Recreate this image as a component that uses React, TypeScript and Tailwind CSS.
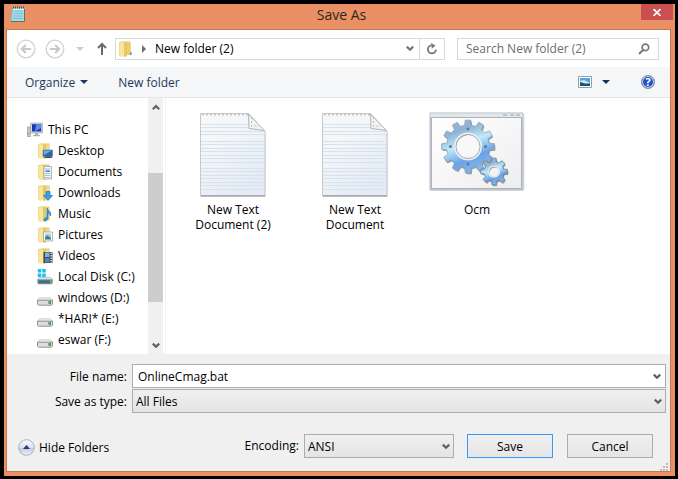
import { useState } from 'react';
import type { ReactNode } from 'react';

type DriveKind = 'pc' | 'desktop' | 'documents' | 'downloads' | 'music' | 'pictures' | 'videos' | 'system' | 'drive';

const treeItems: { label: string; kind: DriveKind }[] = [
  { label: 'Desktop', kind: 'desktop' },
  { label: 'Documents', kind: 'documents' },
  { label: 'Downloads', kind: 'downloads' },
  { label: 'Music', kind: 'music' },
  { label: 'Pictures', kind: 'pictures' },
  { label: 'Videos', kind: 'videos' },
  { label: 'Local Disk (C:)', kind: 'system' },
  { label: 'windows (D:)', kind: 'drive' },
  { label: '*HARI* (E:)', kind: 'drive' },
  { label: 'eswar (F:)', kind: 'drive' },
];

// outline of a gear with square teeth
function gearPath(cx: number, cy: number, outer: number, inner: number, teeth: number) {
  const step = (Math.PI * 2) / teeth;
  const points: string[] = [];
  for (let i = 0; i < teeth; i++) {
    const a = i * step - Math.PI / 2;
    const corners: [number, number][] = [
      [inner, a - step * 0.3],
      [outer, a - step * 0.2],
      [outer, a + step * 0.2],
      [inner, a + step * 0.3],
    ];
    corners.forEach(([r, t]) => points.push(`${(cx + r * Math.cos(t)).toFixed(2)} ${(cy + r * Math.sin(t)).toFixed(2)}`));
  }
  return `M${points.join('L')}Z`;
}

function Chevron({ up = false, className = 'text-[#606060]' }: { up?: boolean; className?: string }) {
  return (
    <svg width="8" height="7" viewBox="0 0 8 7" className={className} aria-hidden="true">
      <path d={up ? 'M0.8 5.2L4 2L7.2 5.2' : 'M0.8 1.6L4 4.8L7.2 1.6'} fill="none" stroke="currentColor" strokeWidth="2.2" />
    </svg>
  );
}

function DownTriangle({ className }: { className: string }) {
  return (
    <svg width="8" height="4" viewBox="0 0 8 4" className={className} aria-hidden="true">
      <path d="M0 0H8L4 4Z" fill="currentColor" />
    </svg>
  );
}

function NotepadIcon() {
  return (
    <svg width="16" height="17" viewBox="0 0 16 17" aria-hidden="true">
      <path d="M2 2L14.5 1.5V16H0.5Z" fill="#7fb9c6" />
      <path d="M3 2H14V15H1.5Z" fill="#a5dbe6" />
      <path d="M4 5H13M4 7.5H13M3 10H13M3 12.5H13" stroke="#7cc0d0" />
      <path d="M14.5 3V15.5H1" fill="none" stroke="#716a60" />
      <path d="M3 1.5H14" stroke="#3d5960" strokeWidth="2" strokeDasharray="1 1" />
      <path d="M3 3.5H14" stroke="#e4f5f6" />
    </svg>
  );
}

function FolderShape() {
  return (
    <>
      <path d="M1 1L4.5 0.5H12.5V14H4V15.5L1 14Z" fill="#e2c467" />
      <path d="M1.3 1.2H7L8.5 2.5V15.5H2L1.3 14.5Z" fill="#f7e5a0" />
      <path d="M6 1.2H7L9 2.8V15.5H6Z" fill="#e6c765" />
      <path d="M9 1.2H12V13.5H9Z" fill="#f0d98a" />
    </>
  );
}

function TreeIcon({ kind }: { kind: DriveKind }) {
  const drawings: Record<DriveKind, ReactNode> = {
    pc: (
      <>
        <path d="M0.5 5H3.5V14.5H0.5Z" fill="#c3c8cb" stroke="#858c90" strokeWidth="0.6" />
        <path d="M1 11H2V12H1Z" fill="#3cb33b" />
        <path d="M3.5 1H15.5V11H3.5Z" fill="#d2d6d8" stroke="#969ea2" strokeWidth="0.6" />
        <path d="M5 2.2H14.2V9.5H5Z" fill="#1737b8" />
        <path d="M9 2.2H14.2V6L8 9.5Z" fill="#5c8ce8" />
        <path d="M8 11H11V13H13V14.3H6V13H8Z" fill="#a9afb3" />
      </>
    ),
    desktop: (
      <>
        <FolderShape />
        <path d="M6 7H15.5V13.5H6Z" fill="#2d66aa" stroke="#517b9e" strokeWidth="0.6" />
        <path d="M6.5 7.5H15L7 12Z" fill="#71aadb" />
        <path d="M7 15L9 13.5H14L15.5 15Z" fill="#304c66" />
      </>
    ),
    documents: (
      <>
        <FolderShape />
        <path d="M7 2.5H14.5V15H7Z" fill="#f7fbfd" stroke="#8d9ba5" strokeWidth="0.7" />
        <path d="M8 5H13.5M8 9.5H13.5M8 11.5H13.5M8 13.5H13.5" stroke="#9caebb" strokeWidth="0.8" />
        <path d="M8.5 7.2H13" stroke="#318fe0" strokeWidth="1.6" />
      </>
    ),
    downloads: (
      <>
        <FolderShape />
        <path d="M9 6.5H13V10.5H15.5L11 15.5L6.5 10.5H9Z" fill="#37a0ee" stroke="#1770bf" strokeWidth="0.7" />
      </>
    ),
    music: (
      <>
        <FolderShape />
        <path d="M10 2C11 5 15 5.5 13.5 10C13 8 12 7.4 11 7V13C10 15.8 6 15.3 7 12.8C7.8 11.7 9 11.8 10 12Z" fill="#319be9" stroke="#1873ba" strokeWidth="0.6" />
      </>
    ),
    pictures: (
      <>
        <FolderShape />
        <path d="M6.5 5H15.5V14H6.5Z" fill="#fff" stroke="#87979e" strokeWidth="0.7" />
        <path d="M8 6.5H14V12.5H8Z" fill="#9ed0f0" />
        <path d="M8 10L10.5 8.5L14 11V12.5H8Z" fill="#477d86" />
      </>
    ),
    videos: (
      <>
        <FolderShape />
        <path d="M6.5 4H15.5V15H6.5Z" fill="#40494f" />
        <path d="M8 4.5H12.5V9H8Z" fill="#7fb2dc" />
        <path d="M8 10H12.5V14.5H8Z" fill="#4b85b8" />
        <path d="M14.2 4.5V15" stroke="#d5dde2" strokeWidth="1.4" strokeDasharray="1.5 1" />
      </>
    ),
    system: (
      <>
        <path d="M0.8 0H4.3V3.5H0.8ZM5.2 0H8.7V3.5H5.2ZM0.8 4.4H4.3V8H0.8ZM5.2 4.4H8.7V8H5.2Z" fill="#13c5f5" />
        <path d="M2.5 8.3H13.5L15.8 10.8H0.2Z" fill="#dfe2e4" stroke="#9ba0a4" strokeWidth="0.5" />
        <path d="M0.3 10.5H15.7V14L14.5 15.3H1.5L0.3 14Z" fill="#7b868c" />
        <path d="M2 11.5H13V14H2Z" fill="#28798e" />
        <path d="M13.3 11.5H14.3V14H13.3Z" fill="#4ae44c" />
      </>
    ),
    drive: (
      <>
        <path d="M2.5 7.8H13.5L15.5 10.3H0.5Z" fill="#f1f2f2" stroke="#b0b2b4" strokeWidth="0.6" />
        <path d="M0.5 10.2H15.5V14L14.5 15.2H1.5L0.5 14Z" fill="#dcdddf" stroke="#85888b" strokeWidth="0.9" />
        <path d="M11.5 11.2H14V13.8H11.5Z" fill="#3a6f35" />
        <path d="M12.2 11.6H13.4V13.4H12.2Z" fill="#4ed044" />
      </>
    ),
  };

  return (
    <svg width="16" height="16" viewBox="0 0 16 16" className="shrink-0" aria-hidden="true">
      {drawings[kind]}
    </svg>
  );
}

function TextFileIcon() {
  const lines = [12, 15, 19, 22, 29, 32, 36, 39, 43, 46, 50, 56, 59, 63, 66, 70, 73, 77];
  return (
    <svg width="68" height="86" viewBox="0 0 68 86" aria-hidden="true">
      <defs>
        <linearGradient id="paper" x1="0" y1="0" x2="0.6" y2="1">
          <stop offset="0" stopColor="#f8f8f8" />
          <stop offset="0.4" stopColor="#f3f5f8" />
          <stop offset="1" stopColor="#e5eaf6" />
        </linearGradient>
      </defs>
      <path d="M2 2H50L67 20V85H2Z" fill="#e4e4e4" />
      <path d="M1.5 1.5H49.5L66 19.5V83.5H1.5Z" fill="url(#paper)" stroke="#c6c9cc" />
      {lines.map((y) => (
        <path key={y} d={`M2 ${y + 0.5}H${y < 17 ? 50 : 65}`} stroke="#d3e4ed" />
      ))}
      <path d="M3 2.5H49" stroke="#c4c4c4" strokeWidth="2" strokeDasharray="2 2" />
      <path d="M49.5 2L65.5 18.5L50 16.5Z" fill="#f3f3f3" stroke="#b2b5b8" />
      <path d="M52.5 5V14H60" fill="none" stroke="#bcbcbc" strokeDasharray="2 2" />
      <path d="M1.5 84H66" stroke="#8d9195" />
    </svg>
  );
}

function BatchFileIcon() {
  return (
    <svg width="96" height="80" viewBox="0 0 96 80" aria-hidden="true">
      <defs>
        <linearGradient id="gear" x1="0.1" y1="0" x2="0.5" y2="1">
          <stop offset="0" stopColor="#a6b8ca" />
          <stop offset="0.25" stopColor="#8fb1d4" />
          <stop offset="0.5" stopColor="#bdebfb" />
          <stop offset="0.78" stopColor="#6ba2e6" />
          <stop offset="1" stopColor="#84b7e5" />
        </linearGradient>
        <linearGradient id="pane" x1="0" y1="0" x2="1" y2="1">
          <stop offset="0" stopColor="#fff" />
          <stop offset="1" stopColor="#eeeeef" />
        </linearGradient>
      </defs>
      <path d="M2 2H95.5V79H2Z" fill="#e6e6e6" />
      <path d="M1 1H94V78H1Z" fill="#ccd4dd" stroke="#b5bcc3" />
      <path d="M1.5 1.5H93.5V5H1.5Z" fill="#e4e7ea" />
      <path d="M74 3H78M81 3H85M87 3H91" stroke="#b4b9bf" strokeWidth="1.5" />
      <path d="M2.5 5.5H92.5V76.5H2.5Z" fill="url(#pane)" stroke="#a9b2bc" />
      <g fillRule="evenodd">
        <path d={`${gearPath(40, 36, 26.5, 21.5, 12)}M53 36A13 13 0 1 0 27 36A13 13 0 1 0 53 36Z`} fill="#68737e" opacity="0.65" />
        <path d={`${gearPath(39, 34.5, 26.5, 21.5, 12)}M52 34.5A13 13 0 1 0 26 34.5A13 13 0 1 0 52 34.5Z`} fill="url(#gear)" stroke="#8299b0" strokeWidth="0.7" />
        <path d={`${gearPath(66, 61, 13.5, 10, 8)}M71.5 61A5.5 5.5 0 1 0 60.5 61A5.5 5.5 0 1 0 71.5 61Z`} fill="#68737e" opacity="0.65" />
        <path d={`${gearPath(65, 59.5, 13.5, 10, 8)}M70.5 59.5A5.5 5.5 0 1 0 59.5 59.5A5.5 5.5 0 1 0 70.5 59.5Z`} fill="url(#gear)" stroke="#697f98" strokeWidth="0.8" />
      </g>
      <circle cx="39" cy="34.5" r="13" fill="none" stroke="#e8eef3" strokeWidth="2" />
      <circle cx="39" cy="34.5" r="12" fill="none" stroke="#929fac" strokeWidth="0.8" />
      <circle cx="65" cy="59.5" r="5.5" fill="none" stroke="#e3ebf2" strokeWidth="1.4" />
      <g fill="#607990">
        <circle cx="39" cy="17" r="1.5" />
        <circle cx="39" cy="52" r="1.5" />
        <circle cx="21.5" cy="34.5" r="1.5" />
        <circle cx="56.5" cy="34.5" r="1.5" />
      </g>
    </svg>
  );
}

const files = [
  { name: 'New Text Document (2)', icon: <TextFileIcon /> },
  { name: 'New Text Document', icon: <TextFileIcon /> },
  { name: 'Ocm', icon: <BatchFileIcon /> },
];

function NavCircle({ label, flip = false }: { label: string; flip?: boolean }) {
  return (
    <button type="button" aria-label={label} className="text-[#c8c8c8]">
      <svg width="20" height="20" viewBox="0 0 20 20" className={flip ? 'rotate-180' : ''} aria-hidden="true">
        <circle cx="10" cy="10" r="8.8" fill="none" stroke="#d2d2d2" strokeWidth="1.3" />
        <path d="M15 10H6M9.8 6L5.8 10L9.8 14" fill="none" stroke="currentColor" strokeWidth="2" />
      </svg>
    </button>
  );
}

function SelectBox({ id, value, className }: { id: string; value: string; className: string }) {
  return (
    <div className={`relative h-6 ${className}`}>
      <select
        id={id}
        defaultValue={value}
        className="block h-full w-full appearance-none border border-[#acacac] bg-linear-to-b from-[#f0f0f0] to-[#e4e4e4] pl-[3px] pr-5 text-black"
      >
        <option>{value}</option>
      </select>
      <span className="pointer-events-none absolute inset-y-0 right-1 flex items-center">
        <Chevron />
      </span>
    </div>
  );
}

function App() {
  const [fileName, setFileName] = useState('OnlineCmag.bat');
  const [search, setSearch] = useState('');

  return (
    <div className="flex min-h-screen flex-col bg-black pt-1 pr-[3px] pb-[3px] pl-1 font-['Open_Sans',sans-serif] text-[12px] leading-[15px] text-black">
      <div className="flex flex-1 flex-col bg-[#e99065] px-[2px] pb-1">
        {/* title bar */}
        <header className="grid h-[25px] shrink-0 grid-cols-[1fr_auto_1fr] items-start pl-1">
          <div className="pt-[2px]">
            <NotepadIcon />
          </div>
          <h1 className="text-[14px] leading-[22px] text-[#33251f]">Save As</h1>
          <button type="button" aria-label="Close" className="flex h-4 w-8 items-center justify-center justify-self-end bg-[#c94f50]">
            <svg width="8" height="7" viewBox="0 0 8 7" aria-hidden="true">
              <path d="M0.5 0L7.5 7M7.5 0L0.5 7" stroke="#fff" strokeWidth="1.7" />
            </svg>
          </button>
        </header>

        <main className="mr-[2px] flex flex-1 flex-col border border-[#c57952] bg-[#f0f0f0]">
          {/* navigation */}
          <nav className="flex h-[37px] shrink-0 items-center bg-white pr-[11px] pl-[9px]">
            <NavCircle label="Back" />
            <div className="ml-[9px] flex">
              <NavCircle label="Forward" flip />
            </div>
            <button type="button" aria-label="Recent locations" className="ml-[11px]">
              <DownTriangle className="text-[#cccccc]" />
            </button>
            <button type="button" aria-label="Up one level" className="ml-[13px]">
              <svg width="10" height="13" viewBox="0 0 10 13" aria-hidden="true">
                <path d="M5 13V2M1 6L5 2L9 6" fill="none" stroke="#6a6a6a" strokeWidth="2" />
              </svg>
            </button>
            <div className="ml-2 flex h-[22px] flex-1 items-center border border-[#d9d9d9]">
              <svg width="16" height="16" viewBox="0 0 16 16" className="ml-[2px]" aria-hidden="true">
                <FolderShape />
                <path d="M9 2H12.5V14H9Z" fill="#edcf6a" />
                <path d="M12 11H13.5V14H12Z" fill="#4196d4" />
              </svg>
              <svg width="4" height="8" viewBox="0 0 4 8" className="ml-2" aria-hidden="true">
                <path d="M0 0L4 4L0 8Z" fill="#6d6d6d" />
              </svg>
              <button type="button" className="ml-[9px]">New folder (2)</button>
              <button type="button" aria-label="Previous locations" className="mr-[5px] ml-auto">
                <Chevron className="text-[#777]" />
              </button>
              <button type="button" aria-label="Refresh" className="flex h-full w-[25px] items-center justify-center border-l border-[#d9d9d9]">
                <svg width="12" height="12" viewBox="0 0 12 12" aria-hidden="true">
                  <path d="M5.5 2.4A4 4 0 1 0 9.9 6.6" fill="none" stroke="#777" strokeWidth="1.8" />
                  <path d="M5 0L9.5 2.6L5.8 5.8Z" fill="#777" />
                </svg>
              </button>
            </div>
            <label className="ml-3 flex h-[22px] w-[202px] items-center border border-[#d9d9d9] pr-2 pl-2">
              <input
                type="text"
                aria-label="Search New folder (2)"
                placeholder="Search New folder (2)"
                value={search}
                onChange={(e) => setSearch(e.target.value)}
                className="min-w-0 flex-1 outline-none placeholder:text-[#6d6d6d]"
              />
              <svg width="12" height="12" viewBox="0 0 12 12" aria-hidden="true">
                <circle cx="7.4" cy="4.4" r="3.3" fill="none" stroke="#777" strokeWidth="1.7" />
                <path d="M5 7L1 11" stroke="#777" strokeWidth="2" />
              </svg>
            </label>
          </nav>

          {/* command bar */}
          <div className="flex h-[31px] shrink-0 items-center border-b border-[#e4e5e7] bg-[#f4f6f8] pr-[15px] pl-[18px] text-[#1e395b]">
            <button type="button" className="flex items-center gap-[5px]">
              Organize
              <DownTriangle className="text-[#1e395b]" />
            </button>
            <button type="button" className="ml-[30px]">New folder</button>
            <button type="button" aria-label="Change your view" className="ml-auto flex items-center gap-[10px]">
              <svg width="14" height="12" viewBox="0 0 14 12" aria-hidden="true">
                <path d="M0.5 0.5H13.5V11.5H0.5Z" fill="#fff" stroke="#8aa0b3" />
                <path d="M2 2H12V10H2Z" fill="#58a3dc" />
                <path d="M2 5L6 4L12 7V8H2Z" fill="#cce8ee" />
                <path d="M2 6L7 7.5H12V10H2Z" fill="#1d5369" />
              </svg>
              <DownTriangle className="text-[#12345d]" />
            </button>
            <button type="button" aria-label="Help" className="ml-[31px] flex size-[14px] items-center justify-center rounded-full border border-[#8c97ac] bg-[#2451c6] text-[11px] leading-3 font-bold text-white ring-1 ring-[#d0d5de] ring-inset">
              ?
            </button>
          </div>

          <div className="flex flex-1 bg-white">
            {/* folder tree */}
            <aside className="w-[141px] shrink-0 pt-[21px] pb-1">
              <button type="button" className="ml-5 flex h-[21px] items-center gap-[5px]">
                <TreeIcon kind="pc" />
                This PC
              </button>
              <ul>
                {treeItems.map((item) => (
                  <li key={item.label}>
                    <button type="button" className="ml-[30px] flex h-[21px] items-center gap-[5px] whitespace-nowrap">
                      <TreeIcon kind={item.kind} />
                      {item.label}
                    </button>
                  </li>
                ))}
              </ul>
            </aside>
            <div className="flex w-[15px] shrink-0 flex-col items-center bg-[#f0f0f0]">
              <button type="button" aria-label="Scroll up" className="flex h-[18px] items-center">
                <Chevron up />
              </button>
              <div className="flex-[57]"></div>
              <div className="w-full flex-[129] bg-[#cdcdcd]"></div>
              <div className="flex-[34]"></div>
              <button type="button" aria-label="Scroll down" className="flex h-[18px] items-center">
                <Chevron />
              </button>
            </div>

            {/* files */}
            <ul className="ml-[2px] flex flex-1 items-start gap-[22px] border-l border-[#f2f2f2] pt-[14px] pl-[17px]">
              {files.map((file) => (
                <li key={file.name}>
                  <button type="button" className="flex w-[100px] flex-col items-center">
                    <span className="flex h-[90px] items-start justify-center">{file.icon}</span>
                    <span className="w-20">{file.name}</span>
                  </button>
                </li>
              ))}
            </ul>
          </div>

          {/* name, type and actions */}
          <form className="shrink-0" onSubmit={(e) => e.preventDefault()}>
            <div className="grid grid-cols-[120px_1fr] items-center gap-x-[5px] gap-y-px pt-[10px] pr-1">
              <label htmlFor="file-name" className="text-right">File name:</label>
              <div className="flex h-6 items-center border border-[#abadb3] bg-white pr-1 pl-[5px]">
                <input
                  id="file-name"
                  type="text"
                  value={fileName}
                  onChange={(e) => setFileName(e.target.value)}
                  className="min-w-0 flex-1 outline-none"
                />
                <button type="button" aria-label="Recent names">
                  <Chevron />
                </button>
              </div>
              <label htmlFor="save-type" className="text-right">Save as type:</label>
              <SelectBox id="save-type" value="All Files" className="w-full" />
            </div>
            <div className="mt-[21px] flex items-start pr-[17px] pb-[14px] pl-[11px]">
              <button type="button" className="mt-[5px] flex items-center gap-1">
                <svg width="17" height="17" viewBox="0 0 17 17" aria-hidden="true">
                  <defs>
                    <linearGradient id="knob" x1="0" y1="0" x2="0" y2="1">
                      <stop offset="0" stopColor="#fdfdfe" />
                      <stop offset="0.5" stopColor="#dde1e8" />
                      <stop offset="0.55" stopColor="#c4cad5" />
                      <stop offset="1" stopColor="#f2f4f7" />
                    </linearGradient>
                  </defs>
                  <circle cx="8.5" cy="8.5" r="7.8" fill="url(#knob)" stroke="#9eb1c6" />
                  <path d="M8.5 6L12 10H5Z" fill="#1f3f87" />
                </svg>
                Hide Folders
              </button>
              <label htmlFor="encoding" className="mt-1 mr-[5px] ml-auto">Encoding:</label>
              <SelectBox id="encoding" value="ANSI" className="w-[150px]" />
              <button type="submit" className="ml-[13px] h-6 w-[86px] border border-[#3399ff] bg-linear-to-b from-[#f0f0f0] to-[#e5e5e5]">
                Save
              </button>
              <button type="button" className="ml-[14px] h-6 w-[86px] border border-[#acacac] bg-linear-to-b from-[#f0f0f0] to-[#e5e5e5]">
                Cancel
              </button>
            </div>
          </form>
          <svg width="8" height="8" viewBox="0 0 8 8" className="-mt-[9px] mr-[2px] self-end" aria-hidden="true">
            <path d="M6 0H8V2H6ZM3 3H5V5H3ZM6 3H8V5H6ZM0 6H2V8H0ZM3 6H5V8H3ZM6 6H8V8H6Z" fill="#bcbcbc" />
          </svg>
        </main>
      </div>
    </div>
  );
}

export default App;
